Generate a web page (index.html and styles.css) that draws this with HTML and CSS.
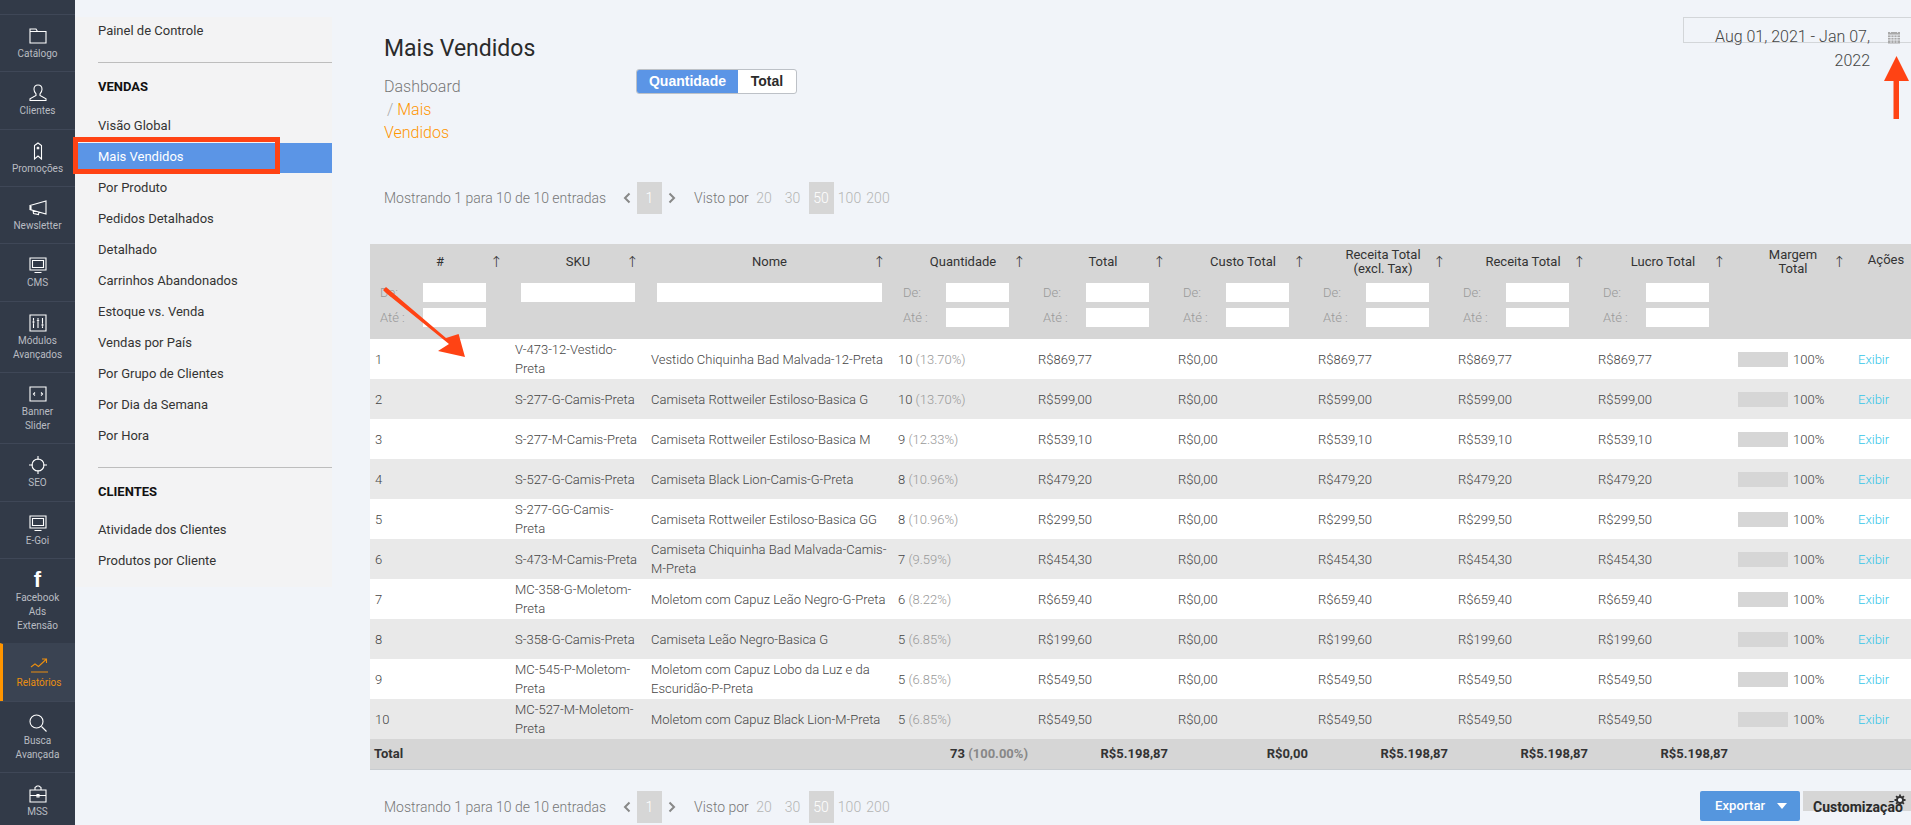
FILE: index.html
```html
<!DOCTYPE html>
<html lang="pt">
<head>
<meta charset="utf-8">
<title>Mais Vendidos</title>
<link rel="stylesheet" href="styles.css">
</head>
<body>
<div class="app">
  <nav class="rail">
    <a class="rail-item"><svg class="ri" viewBox="0 0 18 18"><path d="M1 16V2h6l1.500 2.500H17V16zM1 4.500h7.500"/></svg><span>Catálogo</span></a>
    <a class="rail-item"><svg class="ri" viewBox="0 0 18 18"><path d="M9 1c2.500 0 4 1.800 4 4.200 0 2-1 3.600-2 4.600v1.700l6 3.300V16.500H1v-1.700l6-3.300V9.800c-1-1-2-2.600-2-4.600C5 2.800 6.500 1 9 1z"/></svg><span>Clientes</span></a>
    <a class="rail-item"><svg class="ri" viewBox="0 0 18 18"><path d="M5.500 3.500 9 1l3.500 2.500V17L9 14l-3.500 3z"/><circle cx="9" cy="6" r="1.600" class="solid"/></svg><span>Promoções</span></a>
    <a class="rail-item"><svg class="ri" viewBox="0 0 18 18"><path d="M1 6.500 17 2v13L1 10.500zM4 11.500l.5 3 5 1 .5-2.500M2 6v5"/></svg><span>Newsletter</span></a>
    <a class="rail-item"><svg class="ri" viewBox="0 0 18 18"><path d="M1 2h16v12H1zM3.500 4.500h11v7h-11zM5.500 16.500h7"/></svg><span>CMS</span></a>
    <a class="rail-item"><svg class="ri" viewBox="0 0 18 18"><path d="M1 1h16v16H1zM4.500 4v10M9 4v10M13.500 4v10"/><circle cx="4.500" cy="8" r="1.200" class="solid"/><circle cx="9" cy="6.500" r="1.200" class="solid"/><circle cx="13.500" cy="11" r="1.200" class="solid"/></svg><span>Módulos Avançados</span></a>
    <a class="rail-item"><svg class="ri" viewBox="0 0 18 18"><path d="M1 2h16v14H1zM6 7.500 4.500 9 6 10.500M12 7.500 13.500 9 12 10.500"/></svg><span>Banner Slider</span></a>
    <a class="rail-item"><svg class="ri" viewBox="0 0 18 18"><circle cx="9" cy="9" r="6"/><path d="M9 0v4M9 14v4M0 9h4M14 9h4"/></svg><span>SEO</span></a>
    <a class="rail-item"><svg class="ri" viewBox="0 0 18 18"><path d="M1 2h16v12H1zM3.500 4.500h11v7h-11zM5.500 16.500h7"/></svg><span>E-Goi</span></a>
    <a class="rail-item"><span class="fb">f</span><span>Facebook Ads Extensão</span></a>
    <a class="rail-item is-active"><svg class="ri" viewBox="0 0 18 18"><path d="M1 11l4-3 3.500 2.500L16 3.500M12 3h4.500v4M1 16h17"/></svg><span>Relatórios</span></a>
    <a class="rail-item"><svg class="ri" viewBox="0 0 18 18"><circle cx="7.500" cy="7.500" r="6.500"/><path d="M12.500 12.500 17.500 17.500"/></svg><span>Busca Avançada</span></a>
    <a class="rail-item"><svg class="ri" viewBox="0 0 18 18"><path d="M1 5h16v12H1zM1 10.500h16M6 5V2.500L8 1h2l2 1.500V5M8 9.500h2v2.500H8z"/></svg><span>MSS</span></a>
  </nav>

  <aside class="menu">
    <a class="menu-link first">Painel de Controle</a>
    <hr class="menu-rule">
    <h3 class="menu-head">VENDAS</h3>
    <a class="menu-link">Visão Global</a>
    <a class="menu-link is-current">Mais Vendidos</a>
    <a class="menu-link">Por Produto</a>
    <a class="menu-link">Pedidos Detalhados</a>
    <a class="menu-link">Detalhado</a>
    <a class="menu-link">Carrinhos Abandonados</a>
    <a class="menu-link">Estoque vs. Venda</a>
    <a class="menu-link">Vendas por País</a>
    <a class="menu-link">Por Grupo de Clientes</a>
    <a class="menu-link">Por Dia da Semana</a>
    <a class="menu-link">Por Hora</a>
    <hr class="menu-rule rule-tight">
    <h3 class="menu-head head-tight">CLIENTES</h3>
    <a class="menu-link">Atividade dos Clientes</a>
    <a class="menu-link">Produtos por Cliente</a>
  </aside>

  <main class="main">
    <header class="top">
      <div class="title-col">
        <h1 class="title">Mais Vendidos</h1>
        <p class="crumbs">Dashboard <span class="sep">/</span> <span class="here">Mais</span> <span class="here">Vendidos</span></p>
      </div>
      <div class="toggle"><span class="toggle-on">Quantidade</span><span class="toggle-off">Total</span></div>
      <div class="date">
        <span class="date-text">Aug 01, 2021 - Jan 07, 2022</span>
        <svg class="cal" viewBox="0 0 14 14"><path d="M1 2h12v11.500H1z" class="cal-fill"/><path d="M3.500.5v2.500M10.500.5v2.500M1 5h12M1 7.500h12M1 10h12M4 5v8M7 5v8M10 5v8" class="cal-line"/></svg>
      </div>
    </header>

    <div class="pager">
      <span class="pager-info">Mostrando 1 para 10 de 10 entradas</span>
      <svg class="chev" viewBox="0 0 8 12"><path d="M6.500 1.500 2 6l4.500 4.500"/></svg>
      <span class="page-box">1</span>
      <svg class="chev" viewBox="0 0 8 12"><path d="M1.500 1.500 6 6l-4.500 4.500"/></svg>
      <span class="per-label">Visto por</span>
      <span class="per">20</span><span class="per">30</span><span class="per per-on">50</span><span class="per">100</span><span class="per">200</span>
    </div>

    <table class="grid">
      <colgroup><col class="c-num"><col class="c-sku"><col class="c-name"><col class="c-m"><col class="c-m"><col class="c-m"><col class="c-m"><col class="c-m"><col class="c-m"><col class="c-margin"><col class="c-act"></colgroup>
      <thead>
        <tr class="h-labels">
          <th>#<i class="sort">↑</i></th><th>SKU<i class="sort">↑</i></th><th>Nome<i class="sort">↑</i></th><th>Quantidade<i class="sort">↑</i></th><th>Total<i class="sort">↑</i></th><th>Custo Total<i class="sort">↑</i></th><th><span class="w">Receita Total<br>(excl. Tax)</span><i class="sort">↑</i></th><th>Receita Total<i class="sort">↑</i></th><th>Lucro Total<i class="sort">↑</i></th><th><span class="w2">Margem Total</span><i class="sort">↑</i></th><th class="h-act">Ações</th>
        </tr>
        <tr class="h-filters">
          <td><div class="range"><label>De:</label><input><label>Até :</label><input></div></td>
          <td><input class="wide"></td>
          <td><input class="wide"></td>
          <td><div class="range"><label>De:</label><input><label>Até :</label><input></div></td>
          <td><div class="range"><label>De:</label><input><label>Até :</label><input></div></td>
          <td><div class="range"><label>De:</label><input><label>Até :</label><input></div></td>
          <td><div class="range"><label>De:</label><input><label>Até :</label><input></div></td>
          <td><div class="range"><label>De:</label><input><label>Até :</label><input></div></td>
          <td><div class="range"><label>De:</label><input><label>Até :</label><input></div></td>
          <td></td><td></td>
        </tr>
      </thead>
      <tbody>
        <tr><td>1</td><td class="pad-s">V-473-12-Vestido-Preta</td><td>Vestido Chiquinha Bad Malvada-12-Preta</td><td>10 <em>(13.70%)</em></td><td>R$869,77</td><td>R$0,00</td><td>R$869,77</td><td>R$869,77</td><td>R$869,77</td><td><div class="mg"><b></b>100%</div></td><td class="act"><a>Exibir</a></td></tr>
        <tr><td>2</td><td class="pad-s">S-277-G-Camis-Preta</td><td>Camiseta Rottweiler Estiloso-Basica G</td><td>10 <em>(13.70%)</em></td><td>R$599,00</td><td>R$0,00</td><td>R$599,00</td><td>R$599,00</td><td>R$599,00</td><td><div class="mg"><b></b>100%</div></td><td class="act"><a>Exibir</a></td></tr>
        <tr><td>3</td><td class="pad-s">S-277-M-Camis-Preta</td><td>Camiseta Rottweiler Estiloso-Basica M</td><td>9 <em>(12.33%)</em></td><td>R$539,10</td><td>R$0,00</td><td>R$539,10</td><td>R$539,10</td><td>R$539,10</td><td><div class="mg"><b></b>100%</div></td><td class="act"><a>Exibir</a></td></tr>
        <tr><td>4</td><td class="pad-s">S-527-G-Camis-Preta</td><td>Camiseta Black Lion-Camis-G-Preta</td><td>8 <em>(10.96%)</em></td><td>R$479,20</td><td>R$0,00</td><td>R$479,20</td><td>R$479,20</td><td>R$479,20</td><td><div class="mg"><b></b>100%</div></td><td class="act"><a>Exibir</a></td></tr>
        <tr><td>5</td><td class="pad-s">S-277-GG-Camis-Preta</td><td>Camiseta Rottweiler Estiloso-Basica GG</td><td>8 <em>(10.96%)</em></td><td>R$299,50</td><td>R$0,00</td><td>R$299,50</td><td>R$299,50</td><td>R$299,50</td><td><div class="mg"><b></b>100%</div></td><td class="act"><a>Exibir</a></td></tr>
        <tr><td>6</td><td class="pad-s">S-473-M-Camis-Preta</td><td>Camiseta Chiquinha Bad Malvada-Camis-M-Preta</td><td>7 <em>(9.59%)</em></td><td>R$454,30</td><td>R$0,00</td><td>R$454,30</td><td>R$454,30</td><td>R$454,30</td><td><div class="mg"><b></b>100%</div></td><td class="act"><a>Exibir</a></td></tr>
        <tr><td>7</td><td class="pad-s">MC-358-G-Moletom-Preta</td><td>Moletom com Capuz Leão Negro-G-Preta</td><td>6 <em>(8.22%)</em></td><td>R$659,40</td><td>R$0,00</td><td>R$659,40</td><td>R$659,40</td><td>R$659,40</td><td><div class="mg"><b></b>100%</div></td><td class="act"><a>Exibir</a></td></tr>
        <tr><td>8</td><td class="pad-s">S-358-G-Camis-Preta</td><td>Camiseta Leão Negro-Basica G</td><td>5 <em>(6.85%)</em></td><td>R$199,60</td><td>R$0,00</td><td>R$199,60</td><td>R$199,60</td><td>R$199,60</td><td><div class="mg"><b></b>100%</div></td><td class="act"><a>Exibir</a></td></tr>
        <tr><td>9</td><td class="pad-s">MC-545-P-Moletom-Preta</td><td>Moletom com Capuz Lobo da Luz e da Escuridão-P-Preta</td><td>5 <em>(6.85%)</em></td><td>R$549,50</td><td>R$0,00</td><td>R$549,50</td><td>R$549,50</td><td>R$549,50</td><td><div class="mg"><b></b>100%</div></td><td class="act"><a>Exibir</a></td></tr>
        <tr><td>10</td><td class="pad-s">MC-527-M-Moletom-Preta</td><td>Moletom com Capuz Black Lion-M-Preta</td><td>5 <em>(6.85%)</em></td><td>R$549,50</td><td>R$0,00</td><td>R$549,50</td><td>R$549,50</td><td>R$549,50</td><td><div class="mg"><b></b>100%</div></td><td class="act"><a>Exibir</a></td></tr>
      </tbody>
      <tfoot>
        <tr><td colspan="3">Total</td><td class="r">73 <em>(100.00%)</em></td><td class="r">R$5.198,87</td><td class="r">R$0,00</td><td class="r">R$5.198,87</td><td class="r">R$5.198,87</td><td class="r">R$5.198,87</td><td></td><td></td></tr>
      </tfoot>
    </table>

    <div class="pager pager-bottom">
      <span class="pager-info">Mostrando 1 para 10 de 10 entradas</span>
      <svg class="chev" viewBox="0 0 8 12"><path d="M6.500 1.500 2 6l4.500 4.500"/></svg>
      <span class="page-box">1</span>
      <svg class="chev" viewBox="0 0 8 12"><path d="M1.500 1.500 6 6l-4.500 4.500"/></svg>
      <span class="per-label">Visto por</span>
      <span class="per">20</span><span class="per">30</span><span class="per per-on">50</span><span class="per">100</span><span class="per">200</span>
      <div class="tools">
        <a class="export">Exportar<i class="caret"></i></a>
        <a class="custom"><span class="custom-text">Customização</span><svg class="gear" viewBox="0 0 12 12"><circle cx="6" cy="6" r="3" /><path d="M6 .5v2.500M6 9v2.500M.5 6H3M9 6h2.500M2.100 2.100l1.800 1.800M8.100 8.100l1.800 1.800M2.100 9.900l1.800-1.800M8.100 3.900l1.800-1.800"/></svg></a>
      </div>
    </div>
  </main>
</div>

<svg class="notes" viewBox="0 0 1911 825" aria-hidden="true">
  <rect x="75.500" y="139.500" width="202" height="32" class="note-box"/>
  <path d="M1893.500 119V81h-9.500L1896.500 56 1909 81h-10v38z" class="note-fill"/>
  <path d="M383 290l3-3 60 51 12.600-4L465 357l-27-6 11-7-63-51z" class="note-fill"/>
</svg>
</body>
</html>
```
FILE: styles.css
```css
* { box-sizing: border-box; }
html, body { margin: 0; height: 825px; overflow: hidden; }
body { background: #f1f4f9; font-family: Roboto, "Liberation Sans", sans-serif; font-size: 13px; color: #444; position: relative; }
.app { display: flex; align-items: flex-start; width: 1911px; height: 825px; overflow: hidden; }

/* left rail */
.rail { width: 75px; flex: none; height: 825px; background: #323a48; padding-top: 14px; overflow: hidden; }
.rail-item { display: flex; flex-direction: column; align-items: center; padding: 12px 4px 10.330px; border-top: 1px solid #3f4757; color: #b9bcc2; font-size: 10px; line-height: 14px; text-align: center; }
.rail-item span { display: block; margin-top: 2px; max-width: 52px; }
.ri { display: block; width: 18px; height: 18px; fill: none; stroke: #fff; stroke-width: 1.100; }
.ri .solid { fill: #fff; stroke: #323a48; stroke-width: .4; }
.rail-item .fb { font: bold 22px/18px "Liberation Sans", sans-serif; color: #fff; height: 18px; margin: 0; }
.rail-item.is-active { background: #3a4352; border-left: 3px solid #ff9500; color: #e98e10; border-top-color: #3a4352; }
.is-active .ri { stroke: #e98e10; }

/* secondary menu */
.menu { width: 257px; flex: none; margin-top: 17px; height: 570px; background: #f3f3f4; }
.menu-link { display: block; height: 31px; line-height: 29px; padding-left: 23px; font-size: 13px; color: #333; font-weight: 400; }
.menu-link.first { margin-top: -2px; line-height: 31px; }
.menu-link.is-current { background: #5b95e6; background-clip: padding-box; border-top: 1px solid transparent; line-height: 27px; color: #fff; }
.menu-rule { height: 1px; border: 0; margin: 16px 0 0 23px; background: #bdbdbd; }
.menu-rule.rule-tight { margin-top: 15px; }
.menu-head { margin: 15px 0 16px 23px; font-size: 13px; line-height: 17px; font-weight: 700; color: #111; }
.menu-head.head-tight { margin-bottom: 15px; }

/* main */
.main { flex: none; width: 1579px; padding-left: 38px; }
.top { display: flex; align-items: flex-start; height: 182px; padding-left: 14px; }
.title-col { width: 252px; flex: none; }
.title { margin: 34px 0 0; font-size: 23px; line-height: 30px; font-weight: 400; color: #2b2b2b; }
.crumbs { width: 85px; margin: 11px 0 0; font-size: 16px; line-height: 23px; font-weight: 300; color: #777; }
.sep { color: #aaa; margin-left: 3px; }
.here { color: #ff9500; }
.toggle { display: flex; width: 161px; height: 25px; margin-top: 69px; border: 1px solid #bdc1c7; border-radius: 3px; overflow: hidden; background: #fff; font-size: 14px; line-height: 23px; font-weight: 700; text-align: center; font-family: "Liberation Sans", sans-serif; }
.toggle-on { width: 101px; background: #5b95e6; color: #fff; }
.toggle-off { flex: 1; color: #2b2b2b; }
.date { position: relative; margin: 17px 0 0 auto; width: 228px; height: 26px; border: 1px solid #d3d6d9; border-right: 0; padding: 7px 41px 0 20px; text-align: right; font-size: 16px; line-height: 24px; font-weight: 300; color: #444; }
.date-text { display: block; }
.cal { position: absolute; left: 203px; top: 12px; width: 14px; height: 14px; }
.cal-fill { fill: #a9a9a9; }
.cal-line { stroke: #f1f4f9; stroke-width: .8; fill: none; }

/* pager */
.pager { display: flex; align-items: center; height: 32px; padding-left: 14px; margin-bottom: 30px; color: #777; font-size: 14px; font-weight: 300; }
.pager-info { width: 239px; flex: none; }
.chev { width: 8px; height: 12px; flex: none; fill: none; stroke: #888; stroke-width: 2; }
.page-box { width: 25px; height: 32px; line-height: 32px; margin: 0 6px; background: #d6d6d6; color: #fff; text-align: center; }
.per-label { margin-left: 18px; width: 57.500px; flex: none; }
.per { flex: none; width: 25px; height: 32px; line-height: 32px; text-align: center; color: #b4b4b4; margin-right: 3.500px; }
.per-on { background: #d6d6d6; color: #fff; }
.pager-bottom { margin: 21px 0 0; }

.tools { margin-left: auto; display: flex; align-self: flex-start; }
.export { width: 100px; height: 30px; background: #5596de; color: #fff; font-weight: 500; font-size: 13px; letter-spacing: .1px; line-height: 30px; padding-left: 15px; border-radius: 2px; display: flex; align-items: center; gap: 12px; }
.caret { width: 0; height: 0; border: 5px solid transparent; border-top: 6px solid #fff; border-bottom: 0; }
.custom { position: relative; width: 108px; height: 20px; margin-left: 3px; background: #d6d6d6; }
.custom-text { position: absolute; left: 10px; top: 8px; line-height: 16px; font-size: 14px; font-weight: 700; color: #2b2b2b; white-space: nowrap; }
.gear { position: absolute; left: 91px; top: 3px; width: 12px; height: 12px; fill: #f1f4f9; stroke: #333; stroke-width: 1.800; }

/* table */
.grid { width: 1541px; table-layout: fixed; border-collapse: collapse; font-weight: 300; color: #444; }
.c-num { width: 140px; } .c-sku { width: 136px; } .c-name { width: 247px; } .c-m { width: 140px; } .c-margin { width: 120px; } .c-act { width: 58px; }
.grid thead { background: #d6d6d6; }
.h-labels th { position: relative; height: 34px; padding: 2px 5px 0; font-size: 13px; line-height: 14px; font-weight: 400; color: #333; text-align: center; }
.w { display: block; margin: 0 -10px; }
.w2 { display: block; padding: 0 30px; }
.sort { position: absolute; right: 10px; top: 10px; width: 10px; line-height: 16px; font-style: normal; font-size: 15px; color: #333; font-family: "DejaVu Sans", sans-serif; font-weight: 300; }
.h-labels th.h-act { white-space: nowrap; padding: 0 0 2px 8px; overflow: visible; }
.h-filters td { height: 61px; padding: 5px 0 11px 11px; vertical-align: top; }
.range { display: grid; grid-template-columns: 43px 63px; row-gap: 6px; align-items: center; margin-left: -1px; color: #999; font-size: 13px; font-weight: 300; line-height: 19px; }
input { display: block; width: 63px; height: 19px; border: 0; padding: 0; background: #fff; }
input.wide { width: calc(100% - 11px); }
.grid tbody td { height: 40px; padding: 0 5px; font-size: 13px; line-height: 19px; background: #fff; vertical-align: middle; }
.grid tbody tr:nth-child(even) td { background: #e9e9e9; }
.grid tbody td.pad-s { padding-right: 7px; }
em { font-style: normal; color: #999; }
.mg { display: flex; align-items: center; gap: 5px; }
.mg b { display: block; width: 50px; height: 15px; background: #d6d6d6; }
.act { overflow: visible; white-space: nowrap; }
.act a { color: #35c5e8; }
.grid tfoot td { height: 30px; background: #d6d6d6; padding: 0 5px 0 5px; font-size: 13px; font-weight: 700; color: #333; border-bottom: 1px solid #c8ccd0; }
.grid tfoot td:first-child { padding-left: 4px; }
.grid tfoot em { color: #888; }
.r { text-align: right; }

/* annotations */
.notes { position: absolute; left: 0; top: 0; width: 1911px; height: 825px; pointer-events: none; }
.note-box { fill: none; stroke: #ff4314; stroke-width: 5; }
.note-fill { fill: #ff4314; }
```
